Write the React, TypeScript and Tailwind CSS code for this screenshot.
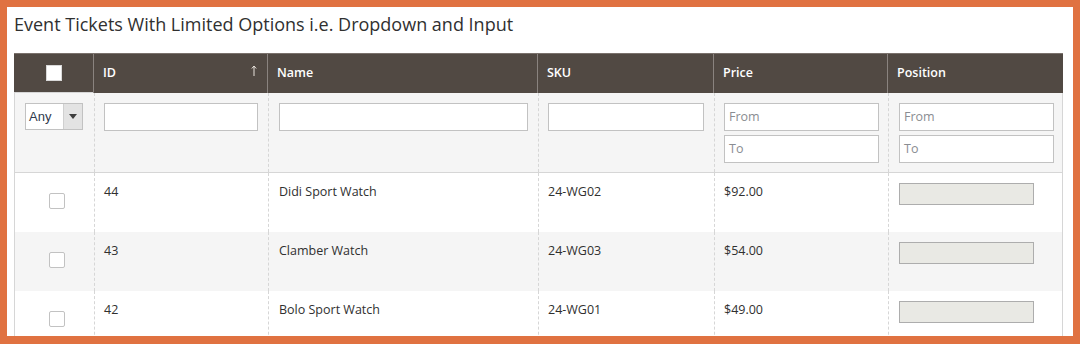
import React from "react";

const cols = "grid grid-cols-[79px_174px_270px_176px_174px_176px]";

const rows = [
  { id: "44", name: "Didi Sport Watch", sku: "24-WG02", price: "$92.00", bg: "bg-white" },
  { id: "43", name: "Clamber Watch", sku: "24-WG03", price: "$54.00", bg: "bg-[#f5f5f5]" },
  { id: "42", name: "Bolo Sport Watch", sku: "24-WG01", price: "$49.00", bg: "bg-white" },
];

function TextInput({ placeholder }: { placeholder?: string }) {
  return (
    <div className="h-[28px] w-full border border-[#c2c2c2] bg-white flex items-center pl-[4px] text-[12.5px] text-[#8a8d92]">
      {placeholder}
    </div>
  );
}

export default function App() {
  return (
    <div className="w-[1080px] h-[344px] bg-[#e07241] pt-[7px] pl-[7px] pr-[7px] pb-[8px] font-['Open_Sans',sans-serif]">
      <div className="bg-white h-full overflow-hidden pl-[7px]">
        <div className="h-[46px] pt-[5px]">
          <h1 className="text-[18px] leading-[24px] text-[#303030]">
            Event Tickets With Limited Options i.e. Dropdown and Input
          </h1>
        </div>
        <div className="w-[1049px]">
          {/* header */}
          <div className={`${cols} h-[40px] bg-[#514943] text-white text-[12.5px] font-semibold border-t border-[#7a716c]`}>
            <div className="flex items-center pl-[32px] border-b border-[#d6d6d6]">
              <div className="w-[16px] h-[16px] bg-white border border-[#d9d9d9]" />
            </div>
            <div className="relative flex items-center pl-[9px] border-l border-[#8a837f]">
              ID
              <svg className="absolute right-[10px] top-[11px]" width="6" height="12" viewBox="0 0 6 12">
                <path d="M3 1 V11 M0.8 3.5 L3 1 L5.2 3.5" stroke="#e8e2dc" strokeWidth="1" fill="none" />
              </svg>
            </div>
            <div className="flex items-center pl-[9px] border-l border-[#8a837f]">Name</div>
            <div className="flex items-center pl-[9px] border-l border-[#8a837f]">SKU</div>
            <div className="flex items-center pl-[9px] border-l border-[#8a837f]">Price</div>
            <div className="flex items-center pl-[9px] border-l border-[#8a837f]">Position</div>
          </div>
          {/* filter row */}
          <div className={`${cols} h-[80px] bg-[#f5f5f5] border-b border-x border-[#d6d6d6]`}>
            <div className="pt-[10px] pl-[10px]">
              <div className="w-[58px] h-[27px] border border-[#c2c2c2] bg-white flex">
                <div className="flex-1 flex items-center pl-[3px] text-[13px] text-[#303a4d] font-['Liberation_Sans',sans-serif]">
                  Any
                </div>
                <div className="w-[19px] h-full bg-[#e3e3e3] border-l border-[#d0d0d0] flex items-center justify-center">
                  <svg width="8" height="5" viewBox="0 0 8 5">
                    <path d="M0 0 H8 L4 5 Z" fill="#3d3d3d" />
                  </svg>
                </div>
              </div>
            </div>
            <div className="pt-[10px] pl-[9px] pr-[10px] border-l border-dashed border-[#d6d6d6]">
              <TextInput />
            </div>
            <div className="pt-[10px] pl-[10px] pr-[10px] border-l border-dashed border-[#d6d6d6]">
              <TextInput />
            </div>
            <div className="pt-[10px] pl-[9px] pr-[10px] border-l border-dashed border-[#d6d6d6]">
              <TextInput />
            </div>
            <div className="pt-[10px] pl-[9px] pr-[9px] border-l border-dashed border-[#d6d6d6] flex flex-col gap-[4px]">
              <TextInput placeholder="From" />
              <TextInput placeholder="To" />
            </div>
            <div className="pt-[10px] pl-[10px] pr-[10px] border-l border-dashed border-[#d6d6d6] flex flex-col gap-[4px]">
              <TextInput placeholder="From" />
              <TextInput placeholder="To" />
            </div>
          </div>
          {/* body */}
          {rows.map((r) => (
            <div key={r.id} className={`${cols} h-[59px] ${r.bg} border-x border-[#d6d6d6] text-[12.5px] leading-[18px] text-[#303030]`}>
              <div className="pt-[20px] pl-[34px]">
                <div className="w-[16px] h-[16px] bg-white border border-[#c2c2c2] rounded-[2px]" />
              </div>
              <div className="pt-[10px] pl-[9px] border-l border-dashed border-[#d6d6d6]">{r.id}</div>
              <div className="pt-[10px] pl-[10px] border-l border-dashed border-[#d6d6d6]">{r.name}</div>
              <div className="pt-[10px] pl-[9px] border-l border-dashed border-[#d6d6d6]">{r.sku}</div>
              <div className="pt-[10px] pl-[9px] border-l border-dashed border-[#d6d6d6]">{r.price}</div>
              <div className="pt-[10px] pl-[10px] border-l border-dashed border-[#d6d6d6]">
                <div className="w-[135px] h-[22px] bg-[#e9e9e4] border border-[#adadad]" />
              </div>
            </div>
          ))}
        </div>
      </div>
    </div>
  );
}
